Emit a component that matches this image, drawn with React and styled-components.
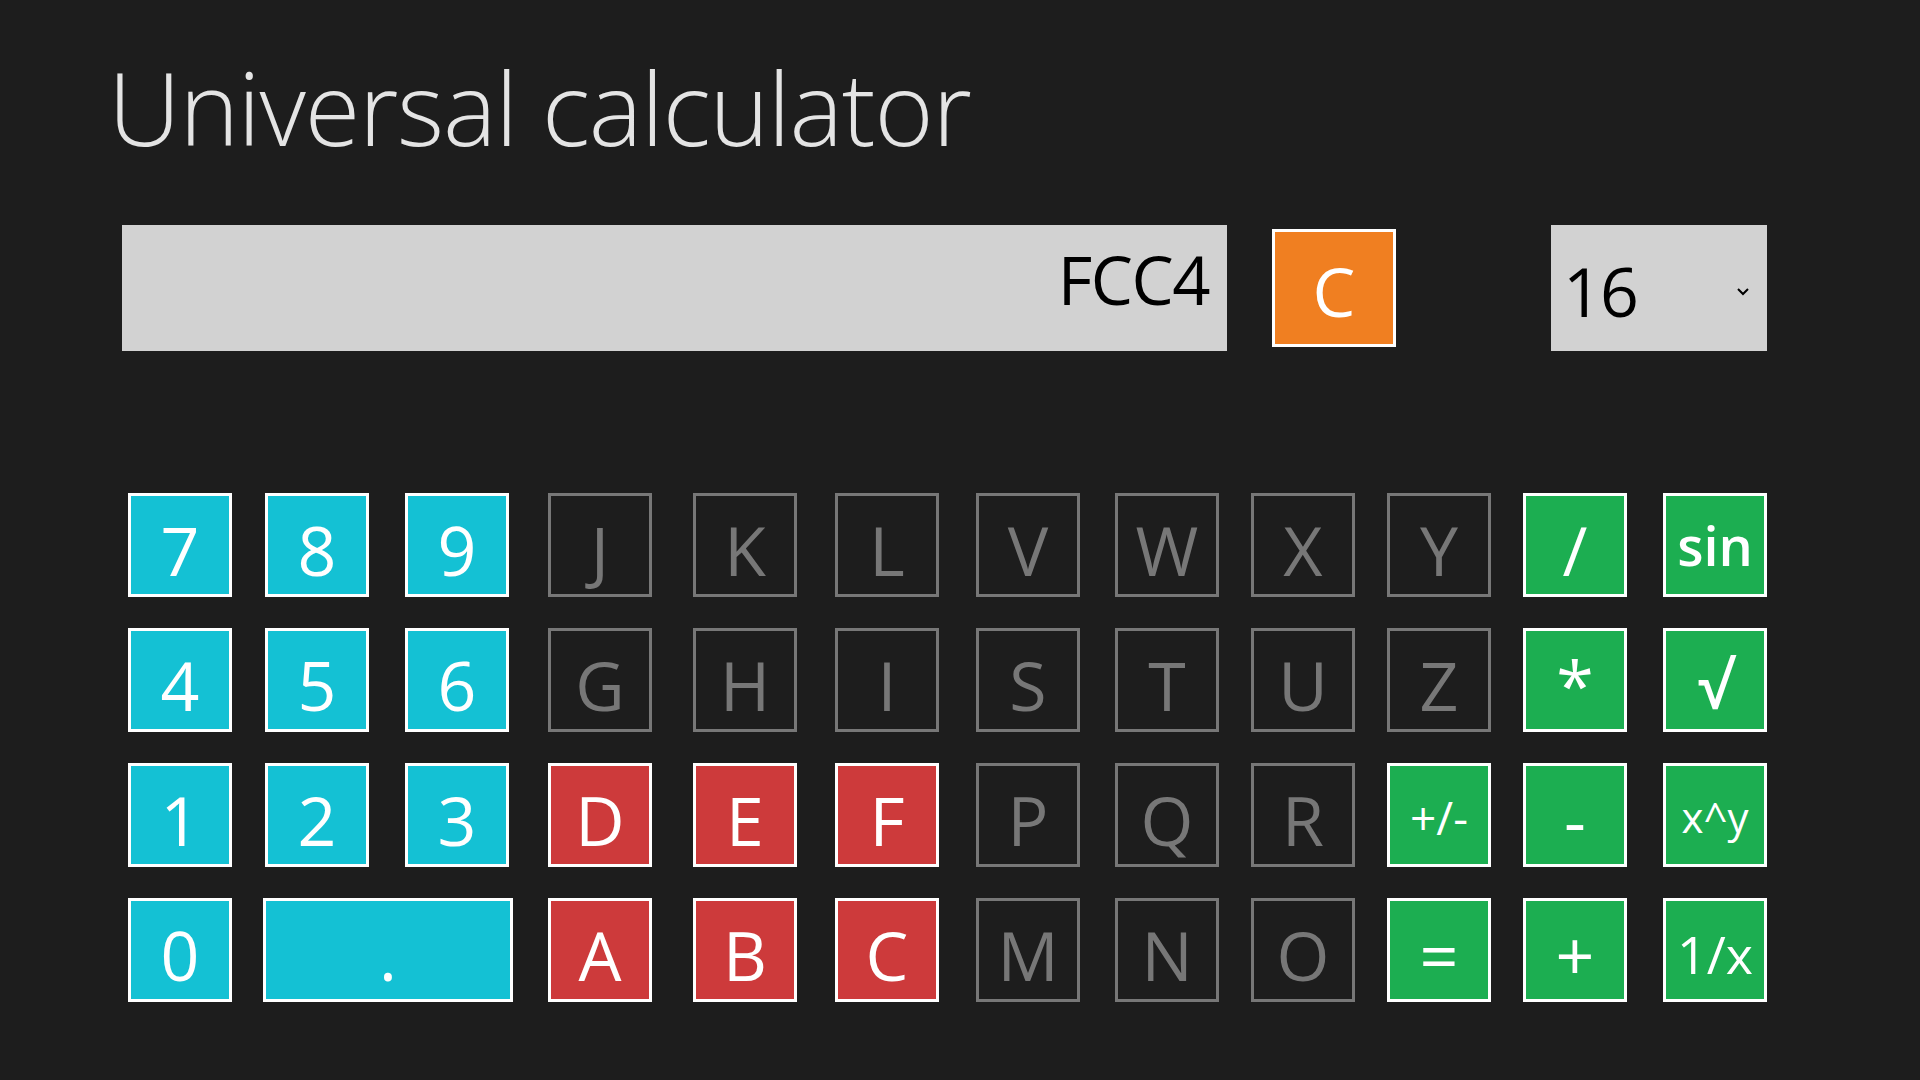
import styled, { createGlobalStyle } from "styled-components";

const GlobalStyle = createGlobalStyle`
body {
  margin: 0;
  background: #1d1d1d;
  font-family: "Open Sans", "Noto Sans", "DejaVu Sans", sans-serif;
}
`;

const Page = styled.div`
width: 1920px;
height: 1080px;
background: #1d1d1d;
display: flex;
flex-direction: column;
overflow: hidden;
`;

const Title = styled.h1`
margin: 57px 0 0 108px;
font-size: 101px;
line-height: 101px;
font-weight: 300;
color: #e4e4e4;
letter-spacing: -1.2px;
`;

const TopRow = styled.div`
display: flex;
align-items: flex-start;
margin: 67px 0 0 122px;
`;

const Display = styled.div`
width: 1105px;
height: 126px;
box-sizing: border-box;
background: #d2d2d2;
color: #000;
font-size: 67px;
line-height: 108px;
letter-spacing: -1.5px;
text-align: right;
padding: 0 18px 18px 0;
`;

const ClearButton = styled.div`
width: 124px;
height: 118px;
box-sizing: border-box;
margin: 4px 0 0 45px;
background: #f07f21;
border: 3px solid #fff;
color: #fff;
font-size: 68px;
line-height: 1;
display: flex;
align-items: center;
justify-content: center;
padding-top: 6px;
`;

const BaseSelect = styled.div`
width: 216px;
height: 126px;
box-sizing: border-box;
margin-left: 155px;
background: #d2d2d2;
color: #000;
font-size: 68px;
letter-spacing: -2px;
line-height: 1;
display: flex;
align-items: center;
justify-content: space-between;
padding: 6px 16px 0 12px;
`;

const Chevron = styled.svg`
width: 16px;
height: 12px;
margin-top: 2px;
`;

const Keypad = styled.div`
display: grid;
grid-template-columns: 137px 140px 143px 145px 142px 141px 139px 136px 136px 136px 140px 104px;
grid-auto-rows: 104px;
row-gap: 31px;
margin: 142px 0 0 128px;
`;

const palette = {
  digit: { bg: "#14c1d4", border: "#fff", color: "#fff" },
  hex: { bg: "#cd3a3b", border: "#fff", color: "#fff" },
  op: { bg: "#1cae51", border: "#fff", color: "#fff" },
  off: { bg: "transparent", border: "#777", color: "#777" },
};

const Key = styled.div`
width: ${(p) => (p.$span ? "250px" : "104px")};
height: 104px;
box-sizing: border-box;
grid-column: ${(p) => (p.$span ? "span 2" : "auto")};
margin-left: ${(p) => (p.$span ? "-2px" : "0")};
background: ${(p) => palette[p.$kind].bg};
border: 3px solid ${(p) => palette[p.$kind].border};
color: ${(p) => palette[p.$kind].color};
font-size: ${(p) => p.$size || 68}px;
font-weight: ${(p) => p.$weight || 400};
line-height: 1;
display: flex;
align-items: center;
justify-content: center;
padding-top: ${(p) => (p.$pad !== undefined ? p.$pad : 10)}px;
`;

const keys = [
  ["7", "digit"], ["8", "digit"], ["9", "digit"], ["J", "off"], ["K", "off"], ["L", "off"],
  ["V", "off"], ["W", "off"], ["X", "off"], ["Y", "off"], ["/", "op"], ["sin", "op", 54, 600, 0],
  ["4", "digit"], ["5", "digit"], ["6", "digit"], ["G", "off"], ["H", "off"], ["I", "off"],
  ["S", "off"], ["T", "off"], ["U", "off"], ["Z", "off"], ["*", "op"], ["√", "op", 64, 600],
  ["1", "digit"], ["2", "digit"], ["3", "digit"], ["D", "hex"], ["E", "hex"], ["F", "hex"],
  ["P", "off"], ["Q", "off"], ["R", "off"], ["+/-", "op", 46, 400, 4], ["-", "op"], ["x^y", "op", 42, 400, 4],
  ["0", "digit"], [".", "digit", 68, 400, 10, true], ["A", "hex"], ["B", "hex"], ["C", "hex"],
  ["M", "off"], ["N", "off"], ["O", "off"], ["=", "op"], ["+", "op"], ["1/x", "op", 52, 400, 8],
];

export default function App() {
  return (
    <Page>
      <GlobalStyle />
      <Title>Universal calculator</Title>
      <TopRow>
        <Display>FCC4</Display>
        <ClearButton>C</ClearButton>
        <BaseSelect>
          <span>16</span>
          <Chevron viewBox="0 0 16 12">
            <polyline points="3,3 8,8 13,3" fill="none" stroke="#000" strokeWidth="2" />
          </Chevron>
        </BaseSelect>
      </TopRow>
      <Keypad>
        {keys.map(([label, kind, size, weight, pad, span]) => (
          <Key key={label} $kind={kind} $size={size} $weight={weight} $pad={pad} $span={span}>
            {label}
          </Key>
        ))}
      </Keypad>
    </Page>
  );
}
